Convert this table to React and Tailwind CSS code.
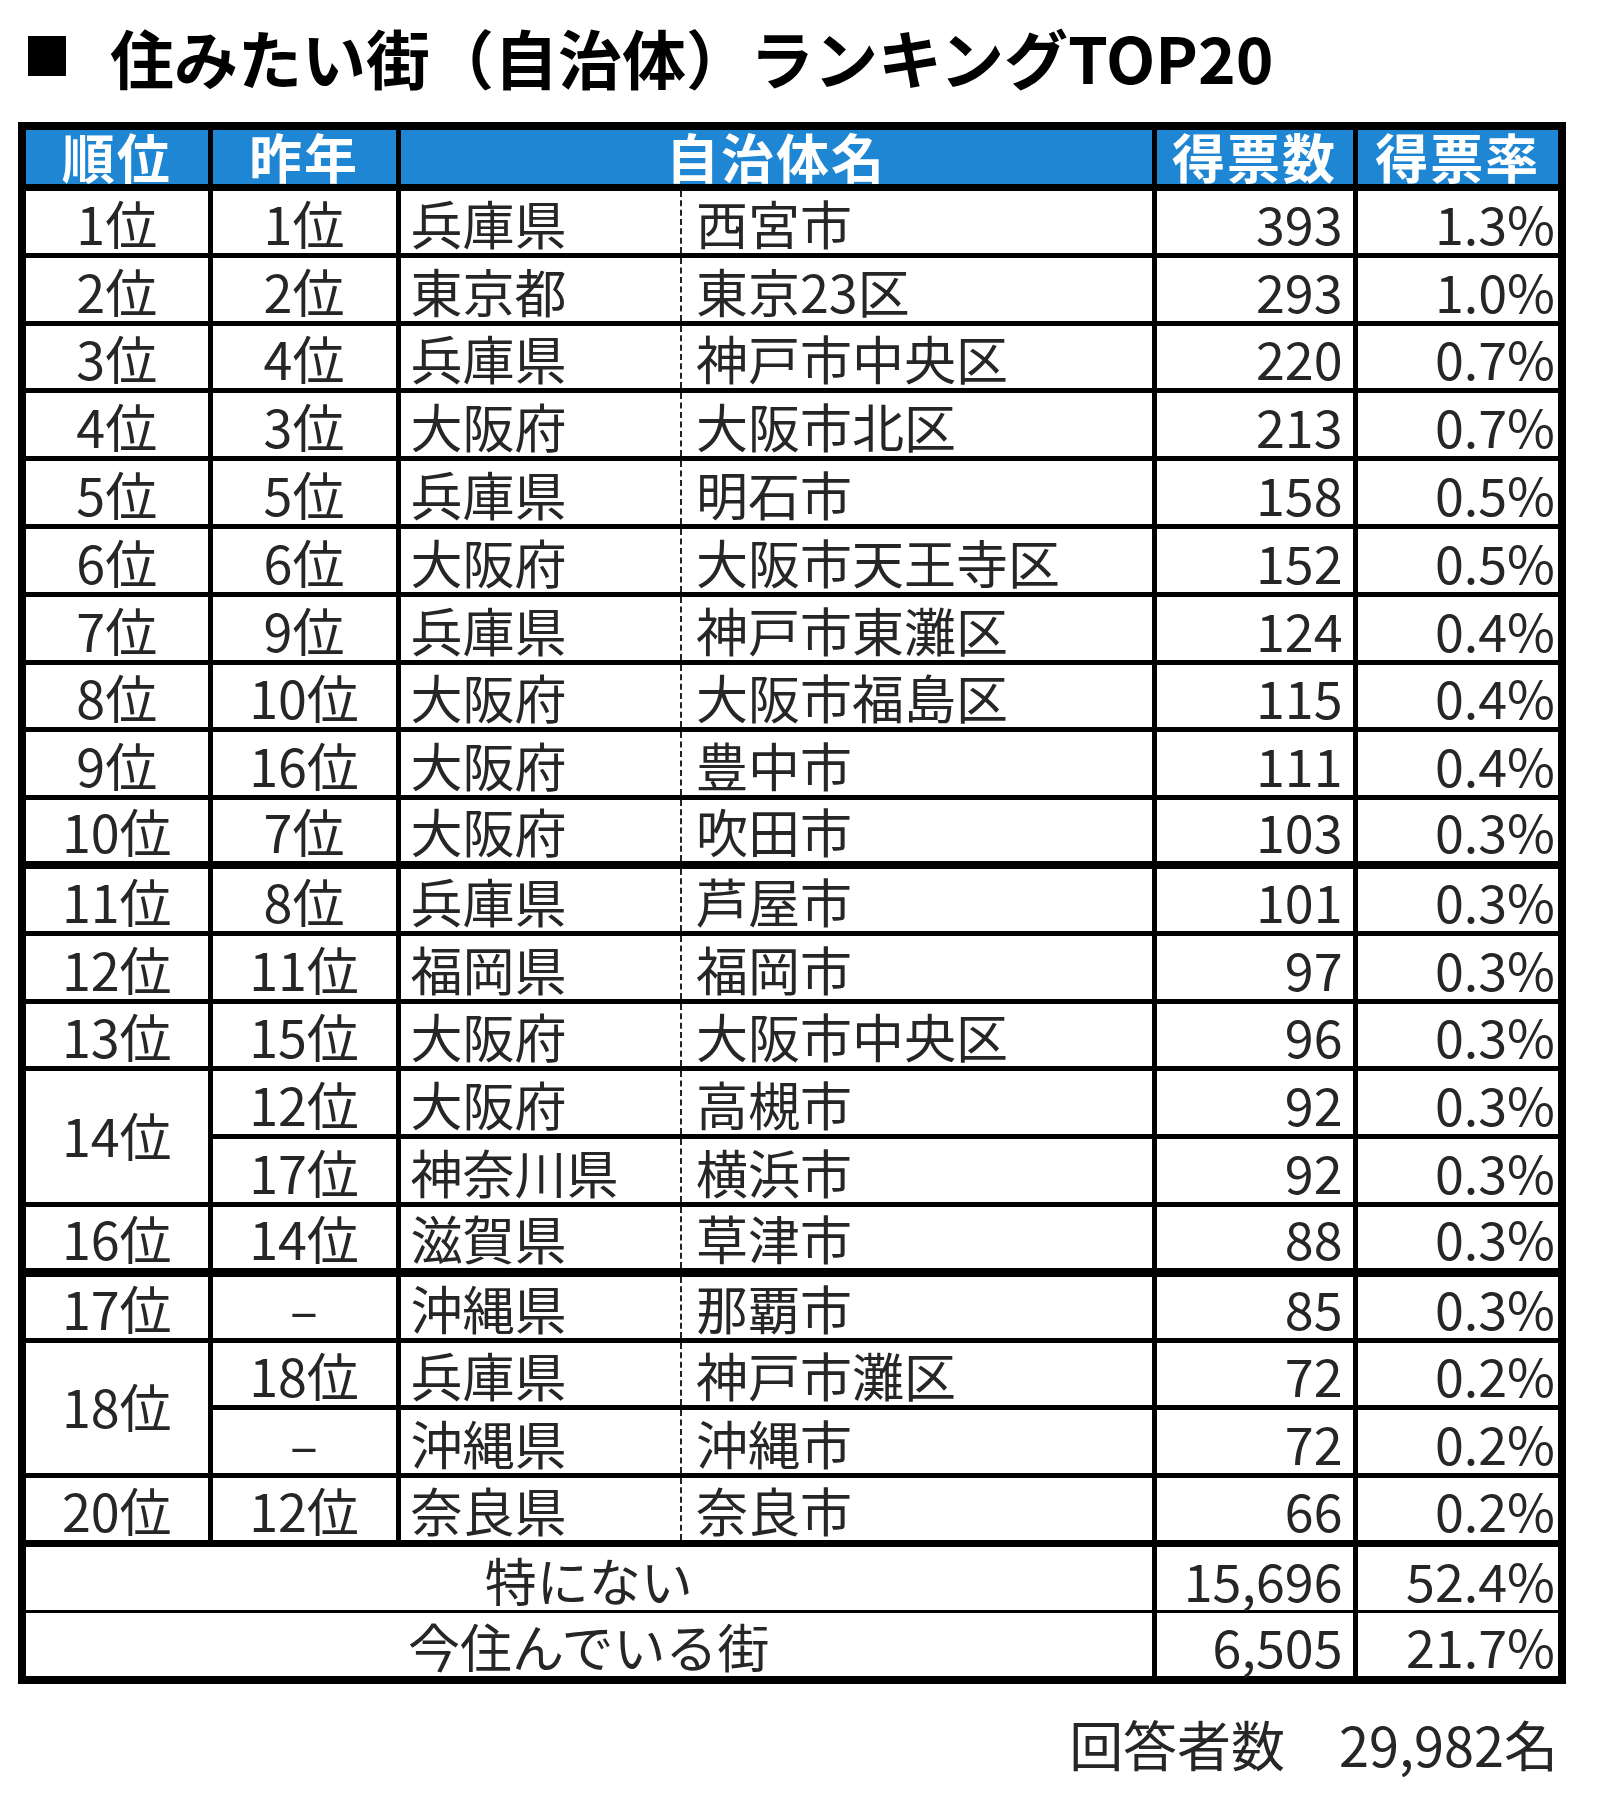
const rows = [
  { rank: '1位', prev: '1位', pref: '兵庫県', city: '西宮市', votes: '393', rate: '1.3%' },
  { rank: '2位', prev: '2位', pref: '東京都', city: '東京23区', votes: '293', rate: '1.0%' },
  { rank: '3位', prev: '4位', pref: '兵庫県', city: '神戸市中央区', votes: '220', rate: '0.7%' },
  { rank: '4位', prev: '3位', pref: '大阪府', city: '大阪市北区', votes: '213', rate: '0.7%' },
  { rank: '5位', prev: '5位', pref: '兵庫県', city: '明石市', votes: '158', rate: '0.5%' },
  { rank: '6位', prev: '6位', pref: '大阪府', city: '大阪市天王寺区', votes: '152', rate: '0.5%' },
  { rank: '7位', prev: '9位', pref: '兵庫県', city: '神戸市東灘区', votes: '124', rate: '0.4%' },
  { rank: '8位', prev: '10位', pref: '大阪府', city: '大阪市福島区', votes: '115', rate: '0.4%' },
  { rank: '9位', prev: '16位', pref: '大阪府', city: '豊中市', votes: '111', rate: '0.4%' },
  { rank: '10位', prev: '7位', pref: '大阪府', city: '吹田市', votes: '103', rate: '0.3%', line: 'border-b-[8px]' },
  { rank: '11位', prev: '8位', pref: '兵庫県', city: '芦屋市', votes: '101', rate: '0.3%' },
  { rank: '12位', prev: '11位', pref: '福岡県', city: '福岡市', votes: '97', rate: '0.3%' },
  { rank: '13位', prev: '15位', pref: '大阪府', city: '大阪市中央区', votes: '96', rate: '0.3%' },
  { rank: '14位', span: 2, prev: '12位', pref: '大阪府', city: '高槻市', votes: '92', rate: '0.3%' },
  { prev: '17位', pref: '神奈川県', city: '横浜市', votes: '92', rate: '0.3%' },
  { rank: '16位', prev: '14位', pref: '滋賀県', city: '草津市', votes: '88', rate: '0.3%', line: 'border-b-[9px]' },
  { rank: '17位', prev: '–', pref: '沖縄県', city: '那覇市', votes: '85', rate: '0.3%' },
  { rank: '18位', span: 2, prev: '18位', pref: '兵庫県', city: '神戸市灘区', votes: '72', rate: '0.2%' },
  { prev: '–', pref: '沖縄県', city: '沖縄市', votes: '72', rate: '0.2%' },
  { rank: '20位', prev: '12位', pref: '奈良県', city: '奈良市', votes: '66', rate: '0.2%', line: 'border-b-[7px]' },
];

const summary = [
  { label: '特にない', votes: '15,696', rate: '52.4%' },
  { label: '今住んでいる街', votes: '6,505', rate: '21.7%' },
];

const td = 'h-[67.8px] border-[5px] border-black align-bottom leading-none pb-[4px]';
const sd = 'h-[68.5px] border-[3px] border-black align-bottom leading-none pb-[4px]';
const th = 'h-[56px] border-[5px] border-black bg-[#1f86d3] align-bottom leading-none pb-[1px] text-center font-bold text-white text-[53px] tracking-[2px]';

export default function App() {
  return (
    <div className="min-h-[1797px] w-[1600px] bg-white font-['Noto_Sans_CJK_JP',sans-serif] text-[#262626]">
      <div className="flex items-center pt-[24px] pl-[28px]">
        <div className="h-[40px] w-[38px] bg-black" />
        <h1 className="ml-[44px] text-[64px] font-bold leading-none text-black">
          住みたい街（自治体）ランキングTOP20
        </h1>
      </div>

      <div className="ml-[18px] mt-[34px] w-[1540px]">
        <table className="w-[1540px] table-fixed border-collapse border-[8px] border-black text-[52px]">
          <colgroup>
            <col className="w-[188px]" />
            <col className="w-[188px]" />
            <col className="w-[283px]" />
            <col className="w-[473px]" />
            <col className="w-[201px]" />
            <col className="w-[207px]" />
          </colgroup>
          <thead>
            <tr className="border-b-[7px] border-black">
              <th className={th}>順位</th>
              <th className={th}>昨年</th>
              <th colSpan={2} className={th}>自治体名</th>
              <th className={th}>得票数</th>
              <th className={th}>得票率</th>
            </tr>
          </thead>
          <tbody>
            {rows.map((r, i) => (
              <tr key={i} className={`border-black ${r.line || ''}`}>
                {r.rank && (
                  <td rowSpan={r.span || 1} className={`${td} text-center ${r.span ? 'align-middle pb-0' : ''}`}>
                    {r.rank}
                  </td>
                )}
                <td className={`${td} text-center`}>{r.prev}</td>
                <td className={`${td} border-r-[2px] pl-[10px] [border-right-style:dashed] [border-right-color:#222]`}>
                  {r.pref}
                </td>
                <td className={`${td} border-l-[2px] pl-[14px] [border-left-style:dashed] [border-left-color:#222]`}>
                  {r.city}
                </td>
                <td className={`${td} pr-[10px] text-right`}>{r.votes}</td>
                <td className={`${td} pr-[3px] text-right`}>{r.rate}</td>
              </tr>
            ))}
            {summary.map((s) => (
              <tr key={s.label}>
                <td colSpan={4} className={`${sd} text-center`}>
                  {s.label}
                </td>
                <td className={`${sd} border-l-[5px] pr-[10px] text-right`}>{s.votes}</td>
                <td className={`${sd} border-l-[5px] pr-[3px] text-right`}>{s.rate}</td>
              </tr>
            ))}
          </tbody>
        </table>

        <p className="mt-[33px] text-right text-[54px] leading-none">回答者数　29,982名</p>
      </div>
    </div>
  );
}
